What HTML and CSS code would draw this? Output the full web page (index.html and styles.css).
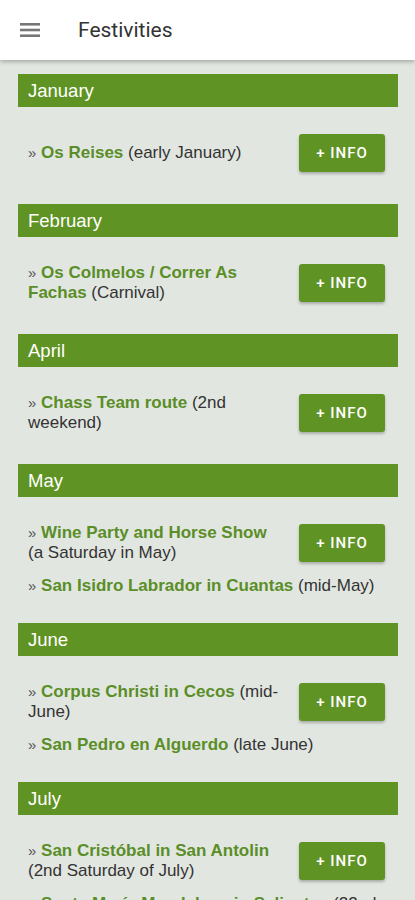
FILE: index.html
```html
<!DOCTYPE html>
<html lang="en">
<head>
    <meta charset="UTF-8">
    <meta name="viewport" content="width=device-width, initial-scale=1.0">
    <title>Festivities</title>
    <link rel="stylesheet" href="styles.css">
</head>
<body>
    <header class="appbar">
        <svg class="menu" width="20" height="16" viewBox="0 0 20 16">
            <rect x="0" y="1" width="20" height="2.6" fill="#777"/>
            <rect x="0" y="6.7" width="20" height="2.6" fill="#777"/>
            <rect x="0" y="12.4" width="20" height="2.6" fill="#777"/>
        </svg>
        <h1>Festivities</h1>
    </header>

    <div class="container">
        <section class="mes">
            <h2>January</h2>
            <div class="fiestas">
                <div class="fiesta">
                    <p><span class="flecha">»</span> <a href="#">Os Reises</a> (early January)</p>
                    <button>+ INFO</button>
                </div>
            </div>
        </section>

        <section class="mes">
            <h2>February</h2>
            <div class="fiestas">
                <div class="fiesta">
                    <p><span class="flecha">»</span> <a href="#">Os Colmelos / Correr As Fachas</a> (Carnival)</p>
                    <button>+ INFO</button>
                </div>
            </div>
        </section>

        <section class="mes">
            <h2>April</h2>
            <div class="fiestas">
                <div class="fiesta">
                    <p><span class="flecha">»</span> <a href="#">Chass Team route</a> (2nd weekend)</p>
                    <button>+ INFO</button>
                </div>
            </div>
        </section>

        <section class="mes">
            <h2>May</h2>
            <div class="fiestas">
                <div class="fiesta">
                    <p><span class="flecha">»</span> <a href="#">Wine Party and Horse Show</a> (a Saturday in May)</p>
                    <button>+ INFO</button>
                </div>
                <p class="extra"><span class="flecha">»</span> <a href="#">San Isidro Labrador in Cuantas</a> (mid-May)</p>
            </div>
        </section>

        <section class="mes">
            <h2>June</h2>
            <div class="fiestas">
                <div class="fiesta">
                    <p><span class="flecha">»</span> <a href="#">Corpus Christi in Cecos</a> (mid-June)</p>
                    <button>+ INFO</button>
                </div>
                <p class="extra"><span class="flecha">»</span> <a href="#">San Pedro en Alguerdo</a> (late June)</p>
            </div>
        </section>

        <section class="mes">
            <h2>July</h2>
            <div class="fiestas">
                <div class="fiesta">
                    <p><span class="flecha">»</span> <a href="#">San Cristóbal in San Antolin</a> (2nd Saturday of July)</p>
                    <button>+ INFO</button>
                </div>
                <p class="extra"><span class="flecha">»</span> <a href="#">Santa María Magdalena in Salientes</a> (22nd July)</p>
            </div>
        </section>
    </div>
</body>
</html>
```

FILE: styles.css
```css
body {
    font-family: "Liberation Sans", Arial, sans-serif;
    margin: 0;
    padding: 0;
    background-color: #e2e6e1;
    color: #333;
}
.appbar {
    background-color: #fff;
    height: 60px;
    display: flex;
    align-items: center;
    padding-left: 20px;
    box-shadow: 0 2px 4px rgba(0,0,0,0.25);
    position: relative;
}
.menu {
    display: block;
}
.appbar h1 {
    font-family: Roboto, sans-serif;
    font-size: 21px;
    font-weight: 400;
    color: #333;
    margin: 0 0 0 38px;
}
.container {
    padding: 14px 17px 0 18px;
}
.mes h2 {
    background-color: #5f9323;
    color: #fff;
    font-size: 18.5px;
    font-weight: 400;
    height: 33px;
    line-height: 33px;
    margin: 0;
    padding-left: 10px;
}
.fiestas {
    padding: 22px 0 27px 10px;
}
.fiesta {
    display: flex;
    align-items: center;
    min-height: 48px;
}
.fiestas p {
    font-size: 17px;
    line-height: 20px;
    margin: 0;
}
.fiesta p {
    flex: 1;
    padding-right: 14px;
}
.fiestas a {
    color: #5a8e27;
    font-weight: bold;
    text-decoration: none;
}
.flecha {
    color: #555;
    font-size: 15px;
}
.fiesta button {
    background-color: #5f9323;
    color: #fff;
    font-family: Roboto, sans-serif;
    font-size: 15px;
    font-weight: 500;
    letter-spacing: 1px;
    border: none;
    border-radius: 3px;
    width: 86px;
    height: 38px;
    margin-right: 13px;
    box-shadow: 0 2px 3px rgba(0,0,0,0.25);
    cursor: pointer;
}
.fiestas .extra {
    margin-top: 9px;
}
```
